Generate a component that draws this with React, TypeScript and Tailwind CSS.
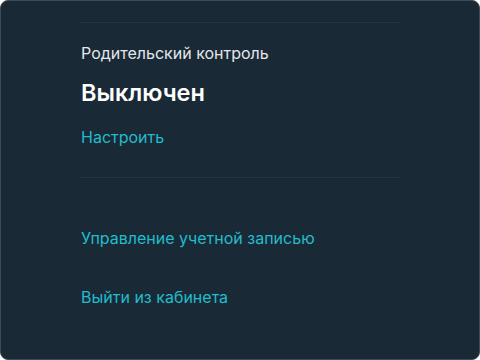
export default function App() {
  return (
    <div className="w-[480px] h-[360px] bg-white">
      <div
        className="w-full h-full rounded-lg border border-[#3d4b56] bg-[#1a2936] px-20 overflow-hidden"
        style={{ fontFamily: 'Inter, "Noto Sans", sans-serif' }}
      >
        <div className="mt-[21px] h-px bg-[#26353f]" />

        <div className="mt-[18px] text-[16px] leading-6 text-[#e3e7ea]">Родительский контроль</div>
        <div className="mt-3 text-[23.5px] leading-8 font-semibold text-white">Выключен</div>
        <div className="mt-4 text-[16px] leading-6 text-[#22bccc]">Настроить</div>

        <div className="mt-7 h-px bg-[#26353f]" />

        <div className="mt-12 text-[16px] leading-6 text-[#22bccc]">Управление учетной записью</div>
        <div className="mt-[35px] text-[16px] leading-6 text-[#22bccc]">Выйти из кабинета</div>
      </div>
    </div>
  );
}
